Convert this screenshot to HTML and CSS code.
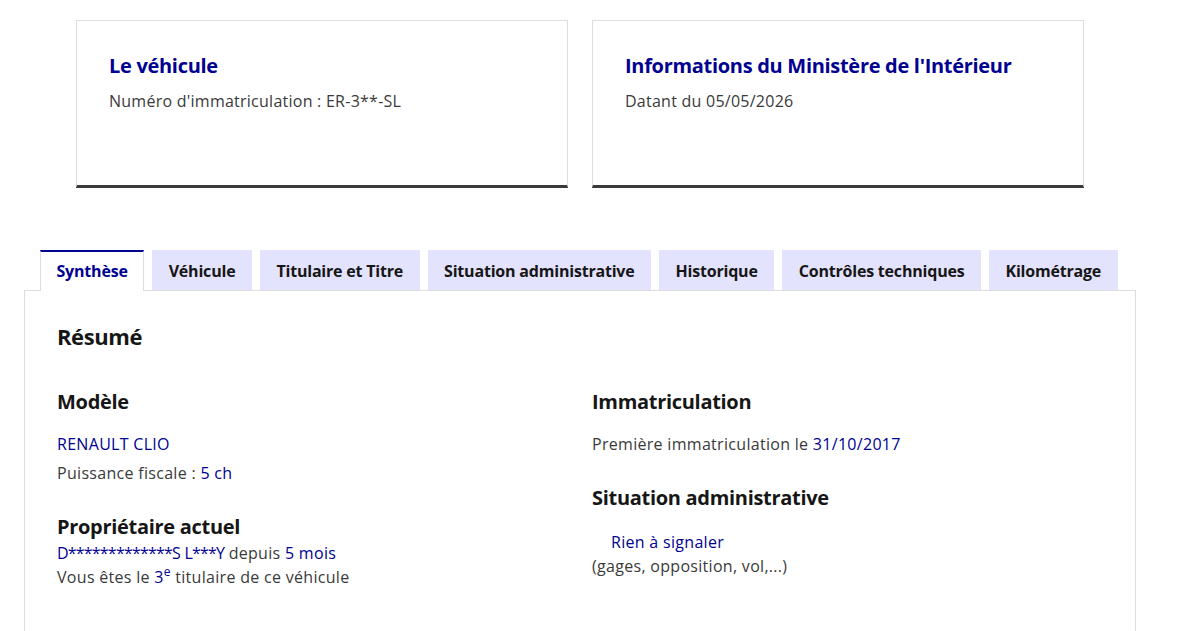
FILE: index.html
```html
<!DOCTYPE html>
<html lang="fr">
<head>
    <meta charset="UTF-8">
    <meta name="viewport" content="width=device-width, initial-scale=1.0">
    <title>Rapport du véhicule</title>
    <link rel="stylesheet" href="styles.css">
</head>
<body>
    <!-- cartes du haut -->
    <div class="cards">
        <div class="card">
            <h2 class="card-title">Le véhicule</h2>
            <p class="card-desc">Numéro d'immatriculation : ER-3**-SL</p>
        </div>
        <div class="card">
            <h2 class="card-title">Informations du Ministère de l'Intérieur</h2>
            <p class="card-desc">Datant du 05/05/2026</p>
        </div>
    </div>

    <!-- onglets -->
    <div class="tabs">
        <ul class="tabs-list">
            <li><a href="javascript:;" class="tab active">Synthèse</a></li>
            <li><a href="javascript:;" class="tab">Véhicule</a></li>
            <li><a href="javascript:;" class="tab">Titulaire et Titre</a></li>
            <li><a href="javascript:;" class="tab">Situation administrative</a></li>
            <li><a href="javascript:;" class="tab">Historique</a></li>
            <li><a href="javascript:;" class="tab">Contrôles techniques</a></li>
            <li><a href="javascript:;" class="tab">Kilométrage</a></li>
        </ul>
        <div class="panel">
            <h2 class="panel-title">Résumé</h2>
            <div class="cols">
                <div class="col">
                    <h3 class="sub">Modèle</h3>
                    <p class="line blue mt16">RENAULT CLIO</p>
                    <p class="line mt5">Puissance fiscale : <span class="blue">5 ch</span></p>
                    <h3 class="sub mt28">Propriétaire actuel</h3>
                    <p class="line"><span class="blue masked">D*************S</span> <span class="blue masked">L***Y</span> depuis <span class="blue">5 mois</span></p>
                    <p class="line">Vous êtes le <span class="blue">3<sup>e</sup></span> titulaire de ce véhicule</p>
                </div>
                <div class="col">
                    <h3 class="sub">Immatriculation</h3>
                    <p class="line mt16">Première immatriculation le <span class="blue">31/10/2017</span></p>
                    <h3 class="sub mt28">Situation administrative</h3>
                    <p class="line blue mt18 indent">Rien à signaler</p>
                    <p class="line">(gages, opposition, vol,...)</p>
                </div>
            </div>
        </div>
    </div>
</body>
</html>
```

FILE: styles.css
```css
*{
    padding: 0;
    margin: 0;
    box-sizing: border-box;
}
ul,ol{
    list-style: none;
}
a{
    text-decoration: none;
}
body{
    font-family: "Open Sans", "Liberation Sans", Arial, sans-serif;
    font-size: 16px;
    line-height: 24px;
    letter-spacing: 0.3px;
    color: #3a3a3a;
    background-color: #fff;
}
.blue{
    color: #000091;
}

/* cartes */
.cards{
    display: flex;
    gap: 24px;
    margin: 20px 0 0 76px;
}
.card{
    width: 492px;
    height: 168px;
    padding: 31px 32px 0;
    border: 1px solid #ddd;
    border-bottom: 3px solid #3a3a3a;
}
.card-title{
    font-size: 20px;
    line-height: 28px;
    font-weight: 700;
    letter-spacing: -0.3px;
    color: #000091;
}
.card-desc{
    margin-top: 9px;
    letter-spacing: 0.25px;
}

/* onglets */
.tabs{
    width: 1112px;
    margin: 62px 0 0 24px;
}
.tabs-list{
    display: flex;
    gap: 8px;
    padding-left: 16px;
    position: relative;
    z-index: 1;
}
.tab{
    display: block;
    height: 40px;
    padding: 9px 16.5px 7px;
    font-weight: 700;
    letter-spacing: -0.2px;
    color: #161616;
    background-color: #e3e3fd;
}
.tab.active{
    height: 41px;
    background-color: #fff;
    color: #000091;
    border: 1px solid #ddd;
    border-top: 2px solid #000091;
    border-bottom: 0;
    padding: 7px 15.5px 8px;
}
.panel{
    margin-top: -1px;
    min-height: 400px;
    padding: 31px 32px;
    border: 1px solid #ddd;
    border-bottom: 0;
}
.panel-title{
    font-size: 22px;
    line-height: 28px;
    font-weight: 700;
    letter-spacing: -0.4px;
    color: #161616;
    margin-bottom: 38px;
}
.cols{
    display: grid;
    grid-template-columns: 535px 1fr;
}
.sub{
    font-size: 20px;
    line-height: 28px;
    font-weight: 700;
    letter-spacing: -0.3px;
    color: #161616;
}
.masked{
    letter-spacing: -0.8px;
}
.line sup{
    font-size: 12px;
    line-height: 0;
    vertical-align: 7px;
}
.indent{
    padding-left: 19px;
}
.mt5{ margin-top: 5px; }
.mt16{ margin-top: 16px; }
.mt18{ margin-top: 18px; }
.mt28{ margin-top: 28px; }
```
